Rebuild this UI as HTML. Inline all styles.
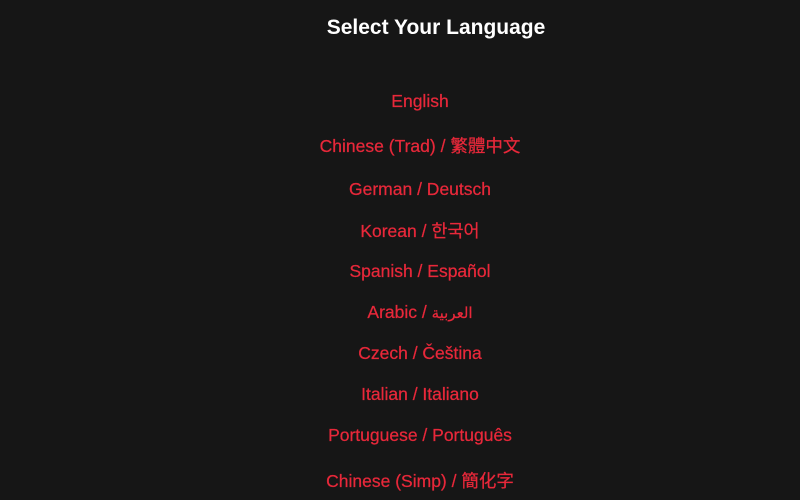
<!DOCTYPE html>
<html><head><meta charset="utf-8"><style>
html,body{margin:0;padding:0;width:800px;height:500px;background:#161616;overflow:hidden}
.t{position:absolute;left:0;width:872px;text-align:center;top:16px;color:#fff;font:bold 21px "Liberation Sans",sans-serif}
.i{position:absolute;left:0;width:840px;text-align:center;color:#e8283a;font:17.5px "Liberation Sans","Noto Sans CJK TC","DejaVu Sans",sans-serif;line-height:20px;-webkit-text-stroke:0.25px #e8283a}
</style></head><body>
<div class="t">Select Your Language</div>
<div class="i" style="top:91px">English</div>
<div class="i" style="top:136px">Chinese (Trad) / 繁體中文</div>
<div class="i" style="top:179px">German / Deutsch</div>
<div class="i" style="top:221px">Korean / <span style="font-family:'Noto Sans CJK KR',sans-serif">한국어</span></div>
<div class="i" style="top:261px">Spanish / Español</div>
<div class="i" style="top:302px">Arabic / <span style="font-family:'DejaVu Sans',sans-serif;font-size:15px">العربية</span></div>
<div class="i" style="top:343px">Czech / Čeština</div>
<div class="i" style="top:384px">Italian / Italiano</div>
<div class="i" style="top:425px">Portuguese / Português</div>
<div class="i" style="top:471px">Chinese (Simp) / <span style="font-family:'Noto Sans CJK SC',sans-serif">簡化字</span></div>
</body></html>
